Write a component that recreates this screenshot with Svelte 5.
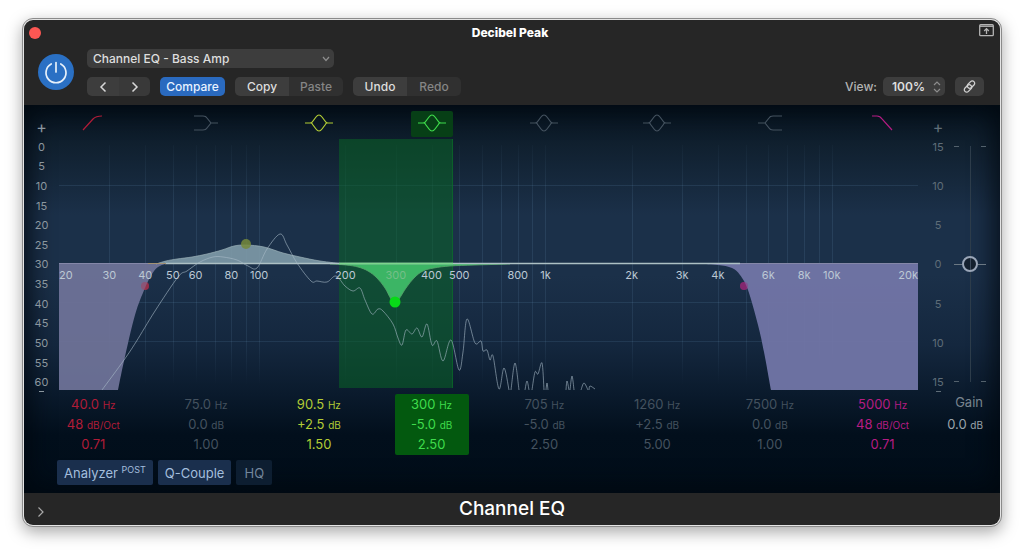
<script>
  const presets = ['Channel EQ - Bass Amp', 'Channel EQ - Kick Drum', 'Channel EQ - Vocal'];
  const zooms = ['75%', '100%', '150%'];

  let bands = [
    { shape: 'lowcut', color: '#b01c38', freq: '40.0', gain: '48', unit: 'dB/Oct', q: '0.71' },
    { shape: 'lowshelf', color: '#44525f', freq: '75.0', gain: '0.0', unit: 'dB', q: '1.00' },
    { shape: 'bell', color: '#b2cc35', freq: '90.5', gain: '+2.5', unit: 'dB', q: '1.50' },
    { shape: 'bell', color: '#3fdc4c', freq: '300', gain: '-5.0', unit: 'dB', q: '2.50' },
    { shape: 'bell', color: '#44525f', freq: '705', gain: '-5.0', unit: 'dB', q: '2.50' },
    { shape: 'bell', color: '#44525f', freq: '1260', gain: '+2.5', unit: 'dB', q: '5.00' },
    { shape: 'highshelf', color: '#44525f', freq: '7500', gain: '0.0', unit: 'dB', q: '1.00' },
    { shape: 'highcut', color: '#b51c83', freq: '5000', gain: '48', unit: 'dB/Oct', q: '0.71' },
  ];

  const shapes = {
    lowcut: 'M5 17 L15 6 Q18 3 24 3',
    lowshelf: 'M3 3 H12 Q15 3 16 5 L20 10 H27 M20 10 L16 15 Q15 17 12 17 H3',
    bell: 'M1 10 H6 Q8 10 9 8 L12 4 Q15 0 18 4 L21 8 Q22 10 24 10 H29 M7 10 Q8 10 9 12 L12 16 Q15 20 18 16 L21 12 Q22 10 23 10',
    highshelf: 'M27 3 H18 Q15 3 14 5 L10 10 H3 M10 10 L14 15 Q15 17 18 17 H27',
    highcut: 'M4 3 H9 Q12 3 14 6 L24 17',
  };

  const analyzerScale = ['+', 0, 5, 10, 15, 20, 25, 30, 35, 40, 45, 50, 55, 60];
  const gainScale = ['+', 15, '', 10, '', 5, '', 0, '', 5, '', 10, '', 15];

  const freqLabels = [
    [20, '20'], [30, '30'], [40, '40'], [50, '50'], [60, '60'], [80, '80'], [100, '100'],
    [200, '200'], [300, '300'], [400, '400'], [500, '500'], [800, '800'], [1000, '1k'],
    [2000, '2k'], [3000, '3k'], [4000, '4k'], [6000, '6k'], [8000, '8k'], [10000, '10k'],
    [20000, '20k'],
  ];

  const gridFreqs = [
    30, 40, 50, 60, 70, 80, 90, 100, 200, 300, 400, 500, 600, 700, 800, 900,
    1000, 2000, 3000, 4000, 5000, 6000, 7000, 8000, 9000, 10000,
  ];

  // position on the log axis, 0..1 for 20 Hz..20 kHz
  const pos = (f) => Math.log10(f / 20) / 3;
  const gridX = (f) => 59 + pos(f) * 859;

  // smooth line through the points (Catmull-Rom as beziers)
  function smooth(pts) {
    let d = `${pts[0][0]} ${pts[0][1]}`;
    for (let i = 0; i < pts.length - 1; i++) {
      const p0 = pts[i - 1] || pts[i];
      const p1 = pts[i];
      const p2 = pts[i + 1];
      const p3 = pts[i + 2] || p2;
      const c1 = [p1[0] + (p2[0] - p0[0]) / 6, p1[1] + (p2[1] - p0[1]) / 6];
      const c2 = [p2[0] - (p3[0] - p1[0]) / 6, p2[1] - (p3[1] - p1[1]) / 6];
      d += ` C${c1} ${c2} ${p2}`;
    }
    return d;
  }

  const lowCut = smooth([[165, 264], [158, 267], [152, 274], [145, 288], [135, 315], [124, 361], [118, 390]]);
  const boost = smooth([[156, 264], [166, 261], [177, 259], [192, 257], [207, 254], [222, 250], [234, 246], [246, 245], [264, 247], [283, 253], [300, 257], [320, 261], [345, 264]]);
  const dip = smooth([[330, 264], [346, 265], [358, 267], [368, 271], [377, 278], [385, 288], [391, 299], [395, 302], [399, 299], [406, 288], [414, 278], [423, 271], [434, 268], [450, 266], [475, 265], [510, 264]]);
  const highCut = smooth([[700, 264], [718, 265], [732, 268], [740, 275], [748, 290], [758, 325], [764, 352], [771, 390]]);

  const spectrum = [
    [[102, 390], [124, 360], [136, 342], [155, 311], [178, 277], [187, 271], [200, 262], [213, 257], [223, 257], [237, 260], [248, 266], [257, 268], [267, 249], [280, 234], [287, 245], [297, 263], [311, 281], [317, 281], [327, 282], [336, 276], [345, 286], [353, 291], [360, 288], [365, 300], [372, 314], [378, 309], [383, 311], [393, 324], [398, 338], [402, 345], [406, 330], [412, 334], [417, 328], [422, 337], [427, 324], [432, 345], [437, 341], [443, 361], [451, 340], [459, 370], [463, 352], [467, 319], [475, 343], [481, 341], [483, 351], [487, 350], [490, 360], [493, 356], [499, 389], [504, 368], [509, 390]],
    [[511, 390], [515, 363], [519, 390]],
    [[525, 390], [527, 381], [529, 390]],
    [[532, 390], [535, 372], [538, 374], [542, 363], [544, 390]],
    [[546, 390], [547, 383], [548, 390]],
    [[566, 390], [567, 381], [569, 390]],
    [[570, 390], [572, 376], [574, 390]],
    [[581, 390], [584, 383], [588, 390]],
    [[589, 390], [590, 386], [595, 389]],
  ];

  let preset = presets[0];
  let zoom = '100%';
  let selected = 3;
  let gain = 0;
</script>

<div class="desktop">
  <main class="window">
    <header>
      <div class="titlebar">
        <button class="close" aria-label="Close"></button>
        <h1>Decibel Peak</h1>
        <button class="popout" aria-label="Detach window">
          <svg width="15" height="13" viewBox="0 0 15 13" fill="none" stroke="#b4b4b4">
            <rect x="0.7" y="0.7" width="13.6" height="11" rx="1" stroke-width="1.3" />
            <path d="M1 2.2 H14" stroke-width="1.4" />
            <path d="M7.5 10 V5 M5.2 7 L7.5 4.6 L9.8 7" stroke-width="1.3" />
          </svg>
        </button>
      </div>

      <div class="toolbar">
        <button class="power" aria-label="Power">
          <svg width="24" height="24" viewBox="0 0 24 24" fill="none" stroke="#e6f0fa" stroke-width="1.7" stroke-linecap="round">
            <path d="M12 2.5 V12" />
            <path d="M7.2 4 A10 10 0 1 0 16.8 4" />
          </svg>
        </button>

        <div class="controls">
          <div class="select preset">
            <select bind:value={preset} aria-label="Preset">
              {#each presets as name}
                <option>{name}</option>
              {/each}
            </select>
            <svg width="8" height="6" viewBox="0 0 8 6" fill="none" stroke="#8d8d8d" stroke-width="1.2">
              <path d="M1 1 L4 4.5 L7 1" />
            </svg>
          </div>
          <div class="row">
            <div class="group arrows">
              <button aria-label="Previous preset">
                <svg width="8" height="12" viewBox="0 0 8 12" fill="none" stroke="#d8d8d8" stroke-width="1.5">
                  <path d="M6.5 1.5 L2 6 L6.5 10.5" />
                </svg>
              </button>
              <button aria-label="Next preset">
                <svg width="8" height="12" viewBox="0 0 8 12" fill="none" stroke="#d8d8d8" stroke-width="1.5">
                  <path d="M1.5 1.5 L6 6 L1.5 10.5" />
                </svg>
              </button>
            </div>
            <button class="compare">Compare</button>
            <div class="group pair">
              <button>Copy</button>
              <button disabled>Paste</button>
            </div>
            <div class="group pair">
              <button>Undo</button>
              <button disabled>Redo</button>
            </div>
          </div>
        </div>

        <div class="view">
          <label for="zoom">View:</label>
          <div class="select zoom">
            <select id="zoom" bind:value={zoom}>
              {#each zooms as z}
                <option>{z}</option>
              {/each}
            </select>
            <svg width="8" height="12" viewBox="0 0 8 12" fill="none" stroke="#8d8d8d" stroke-width="1.2">
              <path d="M1 4 L4 1 L7 4 M1 8 L4 11 L7 8" />
            </svg>
          </div>
          <button class="link" aria-label="Link">
            <svg width="15" height="15" viewBox="0 0 15 15" fill="none" stroke="#d0d0d0" stroke-width="1.3">
              <rect x="-4.200" y="-2.400" width="8.400" height="4.800" rx="2.400" transform="translate(9 5.600) rotate(-45)" />
              <rect x="-4.200" y="-2.400" width="8.400" height="4.800" rx="2.400" transform="translate(6 9.400) rotate(-45)" />
            </svg>
          </button>
        </div>
      </div>
    </header>

    <section class="eq">
      <div class="bands shapes">
        {#each bands as band, i}
          <button
            class:active={selected === i}
            style="color: {band.color}"
            aria-label="Band {i + 1}"
            on:click={() => (selected = i)}>
            <svg width="30" height="20" viewBox="0 0 30 20" fill="none" stroke="currentColor" stroke-width="1.2">
              <path d={shapes[band.shape]} />
            </svg>
          </button>
        {/each}
      </div>

      <div class="scale left">
        {#each analyzerScale as label}
          <span class:plus={label === '+'}>{label}</span>
        {/each}
      </div>

      <div class="plot">
        <svg class="graph" viewBox="59 139 859 251" preserveAspectRatio="none" fill="none">
          <defs>
            <linearGradient id="fade" x1="0" y1="0" x2="0" y2="1">
              <stop offset="0" stop-color="#7fb0d8" stop-opacity="0.03" />
              <stop offset="0.25" stop-color="#7fb0d8" stop-opacity="0.13" />
              <stop offset="0.8" stop-color="#7fb0d8" stop-opacity="0.11" />
              <stop offset="1" stop-color="#7fb0d8" stop-opacity="0" />
            </linearGradient>
          </defs>

          {#each gridFreqs as f}
            <rect x={Math.round(gridX(f))} y="145" width="1" height="240" fill="url(#fade)" />
          {/each}
          <path d="M59 185.5 H918 M59 302.5 H918 M59 341.5 H918" stroke="#7fb0d8" stroke-opacity="0.13" />

          <rect x="339" y="139" width="114" height="249" fill="#0a6527" fill-opacity="0.55" />
          <path d="M452.5 139 V388" stroke="#0a7a28" stroke-opacity="0.5" />

          <circle cx="145" cy="286" r="4" fill="#b5304a" fill-opacity="0.65" />
          <circle cx="744" cy="286" r="4" fill="#a0257a" fill-opacity="0.65" />

          <path d="M59 263 H165 L{lowCut} L59 390 Z" fill="#6f7398" fill-opacity="0.94" />
          <path d="M{boost} Z" fill="#7f9ba9" fill-opacity="0.9" />
          <path d="M{dip} Z" fill="#3cb565" />
          <path d="M{highCut} H918 V263 H700 Z" fill="#7075a6" fill-opacity="0.96" />

          <path d="M{boost}" stroke="#9bb0b8" stroke-opacity="0.7" />
          <path d="M{dip}" stroke="#58a66c" stroke-opacity="0.8" />
          <path d="M59 263.5 H150 M740 263.5 H918" stroke="#8487a8" />
          <path d="M165 263.5 H740" stroke="#adc0c4" stroke-width="1.5" />
          <path d="M148 263.5 H166" stroke="#a39274" />
          <path d="M339 263.5 H453" stroke="#7cd58c" stroke-width="1.5" />

          <path d={spectrum.map((s) => 'M' + smooth(s)).join(' ')} stroke="#a9bac8" stroke-opacity="0.6" />

          <circle cx="145" cy="286" r="4" fill="#b5304a" fill-opacity="0.4" />
          <circle cx="744" cy="286" r="4" fill="#a0257a" fill-opacity="0.4" />
          <circle cx="246" cy="244" r="5" fill="#76893c" fill-opacity="0.85" />
          <circle cx="395" cy="302" r="5.5" fill="#08da18" />
        </svg>
        {#each freqLabels as [f, text]}
          <span
            class="freq"
            class:first={f === 20}
            class:last={f === 20000}
            class:dim={f === 300}
            style="left: {pos(f) * 100}%">{text}</span>
        {/each}
      </div>

      <div class="scale right">
        {#each gainScale as label}
          <span class:plus={label === '+'}>{label}</span>
        {/each}
      </div>

      <div class="fader">
        <input id="gain" type="range" min="-15" max="15" step="0.1" bind:value={gain} />
      </div>

      <div class="bands values">
        {#each bands as band, i}
          <div class="band" class:active={selected === i} style="color: {band.color}">
            <span>{band.freq} <small>Hz</small></span>
            <span>{band.gain} <small>{band.unit}</small></span>
            <span>{band.q}</span>
          </div>
        {/each}
      </div>

      <div class="gain">
        <label for="gain">Gain</label>
        <output for="gain">{gain.toFixed(1)} <small>dB</small></output>
      </div>

      <div class="options">
        <button class="on">Analyzer <sup>POST</sup></button>
        <button class="on">Q-Couple</button>
        <button>HQ</button>
      </div>
    </section>

    <footer>
      <button aria-label="Show details">
        <svg width="8" height="12" viewBox="0 0 8 12" fill="none" stroke="#a8a8a8" stroke-width="1.2">
          <path d="M1.5 1.5 L6 6 L1.5 10.5" />
        </svg>
      </button>
      <h2>Channel EQ</h2>
    </footer>
  </main>
</div>

<style>
  :global(body) {
    margin: 0;
    background: #fff;
  }

  .desktop {
    padding: 18px 22px 27px;
    font-family: Inter, 'Liberation Sans', sans-serif;
    font-size: 13px;
  }

  .window {
    border: 1px solid #8b8b8b;
    border-radius: 11px;
    padding: 1px;
    background: #e4e4e4;
    box-shadow: 0 5px 16px rgba(0, 0, 0, 0.35);
  }

  button,
  select {
    font: inherit;
    color: inherit;
    border: none;
    margin: 0;
    padding: 0;
    background: none;
  }

  svg {
    display: block;
  }

  header {
    height: 85px;
    background: #262626;
    border-radius: 9px 9px 0 0;
    color: #dedede;
    font-size: 12px;
    font-weight: 500;
  }

  .titlebar {
    display: flex;
    justify-content: space-between;
    align-items: center;
    height: 25px;
    padding: 0 6px 1px 5px;
  }

  h1 {
    margin: 0;
    font-size: 12px;
    font-weight: 800;
    color: #fff;
  }

  .close {
    width: 12px;
    height: 12px;
    border-radius: 50%;
    background: #fc5753;
  }

  .popout {
    padding-bottom: 4px;
  }

  .toolbar {
    display: flex;
    align-items: flex-start;
    padding: 3px 16px 0 14px;
  }

  .power {
    display: grid;
    place-items: center;
    width: 36px;
    height: 36px;
    margin: 5px 13px 0 0;
    border-radius: 50%;
    background: #2a70c4;
  }

  .controls {
    display: flex;
    flex-direction: column;
    gap: 9px;
  }

  .row,
  .group {
    display: flex;
  }

  .row {
    gap: 10px;
  }

  .select {
    display: flex;
    align-items: center;
    height: 19px;
    border-radius: 5px;
    background: #3d3d3d;
  }

  .select select {
    appearance: none;
    flex: 1;
    height: 19px;
    padding-left: 6px;
    outline: none;
  }

  .select svg {
    margin-right: 4px;
    pointer-events: none;
  }

  .preset {
    width: 247px;
  }

  .group,
  .compare,
  .link {
    height: 19px;
    border-radius: 5px;
    overflow: hidden;
  }

  .group button {
    display: grid;
    place-items: center;
    background: #3d3d3d;
  }

  .group button:disabled {
    background: #303030;
    color: #858585;
  }

  .arrows button {
    width: 32px;
  }

  .arrows button + button {
    width: 31px;
    background: #393939;
  }

  .pair button {
    width: 54px;
  }

  .compare {
    width: 65px;
    background: #2a6abf;
    color: #e8f2ff;
  }

  .view {
    display: flex;
    align-items: center;
    gap: 10px;
    margin: 28px 0 0 auto;
  }

  .view label {
    margin-right: -4px;
    color: #b4b4b4;
  }

  .zoom {
    width: 62px;
    font-weight: 600;
  }

  .zoom select {
    width: 50px;
    padding-left: 9px;
  }

  .link {
    display: grid;
    place-items: center;
    width: 29px;
    background: #3d3d3d;
  }

  .eq {
    display: grid;
    grid-template-columns: 35px 1fr 40px 24px 18px;
    grid-template-rows: 34px 251px 65px 38px;
    background: linear-gradient(#06131f 0, #10202f 40px, #1b3049 110px, #1b3049 170px, #14273e 240px, #0a1a2c 290px, #020f1c 330px, #010d19 100%);
    box-shadow: inset 0 0 24px 6px rgba(0, 8, 14, 0.8);
    color: #78848e;
  }

  .bands {
    display: grid;
    grid-template-columns: repeat(8, 1fr);
    grid-column: 1 / -1;
    margin: 0 61px 0 13px;
    justify-items: center;
  }

  .shapes {
    grid-row: 1;
    align-items: center;
    padding-top: 4px;
  }

  .shapes button {
    display: grid;
    place-items: center;
    width: 42px;
    height: 26px;
    padding-bottom: 2px;
    border-radius: 2px;
  }

  .shapes button.active {
    background: #073f16;
  }

  .scale {
    display: flex;
    flex-direction: column;
    grid-row: 1 / 3;
    margin-top: 12px;
    margin-bottom: -2px;
    font-size: 11px;
    text-align: center;
  }

  .scale span {
    display: grid;
    place-items: center;
    flex: 1;
  }

  .scale .plus {
    font-size: 16px;
  }

  .scale::after {
    content: '';
    align-self: center;
    width: 5px;
    height: 1px;
    margin-top: -1px;
    background: currentColor;
  }

  .left {
    grid-column: 1;
    color: #8c979f;
  }

  .right {
    grid-column: 3;
    color: #5f6d78;
  }

  .plot {
    position: relative;
    grid-column: 2;
    grid-row: 2;
  }

  .graph {
    width: 100%;
    height: 100%;
  }

  .freq {
    position: absolute;
    top: 129px;
    transform: translateX(-50%);
    font-size: 11px;
    line-height: 14px;
    color: #bcc8d4;
  }

  .freq.first {
    transform: none;
  }

  .freq.last {
    transform: translateX(-100%);
  }

  .freq.dim {
    color: #74bf88;
  }

  .fader {
    grid-column: 4;
    grid-row: 2;
    margin: 7px -4px 8px;
    background:
      linear-gradient(#53616c, #53616c) 0 0 / 5px 1px no-repeat,
      linear-gradient(#53616c, #53616c) 100% 0 / 5px 1px no-repeat,
      linear-gradient(#6b7883, #6b7883) 0 50% / 8px 1px no-repeat,
      linear-gradient(#6b7883, #6b7883) 100% 50% / 8px 1px no-repeat,
      linear-gradient(#53616c, #53616c) 0 100% / 5px 1px no-repeat,
      linear-gradient(#53616c, #53616c) 100% 100% / 5px 1px no-repeat,
      linear-gradient(#2d3c4a, #2d3c4a) 50% 0 / 1px 100% no-repeat;
  }

  .fader input {
    appearance: none;
    writing-mode: vertical-lr;
    direction: rtl;
    display: block;
    width: 100%;
    height: 100%;
    margin: 0;
    background: none;
  }

  .fader input::-webkit-slider-thumb {
    appearance: none;
    box-sizing: border-box;
    width: 16px;
    height: 16px;
    border: 2px solid #9aa6b8;
    border-radius: 50%;
    background: linear-gradient(#3c4a5c, #3c4a5c) 50% 50% / 1px 100% no-repeat #14202e;
  }

  small {
    font-size: 10px;
    line-height: 1;
  }

  .values {
    grid-row: 3;
    align-items: start;
    padding-top: 4px;
  }

  .band {
    display: flex;
    flex-direction: column;
    align-items: center;
    width: 74px;
    height: 61px;
    border-radius: 2px;
    line-height: 20px;
  }

  .band span {
    height: 20px;
    white-space: nowrap;
  }

  .band.active {
    background: #03590f;
  }

  .gain {
    display: flex;
    flex-direction: column;
    align-items: flex-end;
    grid-column: 3 / -1;
    grid-row: 3;
    padding: 2px 17px 0 0;
    line-height: 20px;
  }

  .gain output {
    padding-top: 2px;
    color: #9aa4ac;
    white-space: nowrap;
  }

  .options {
    display: flex;
    gap: 5px;
    grid-column: 1 / -1;
    grid-row: 4;
    padding: 5px 0 0 33px;
  }

  .options button {
    min-width: 36px;
    height: 25px;
    padding: 0 7px;
    border-radius: 2px;
    background: #0d1e31;
    color: #73869c;
    font-size: 13px;
  }

  .options .on {
    background: #1a2f4d;
    color: #a3bedd;
  }

  sup {
    font-size: 9px;
    line-height: 0;
  }

  footer {
    display: grid;
    grid-template-columns: 1fr auto 1fr;
    align-items: center;
    height: 32px;
    background: #262626;
    border-radius: 0 0 9px 9px;
  }

  footer button {
    justify-self: start;
    padding: 6px 0 0 13px;
  }

  h2 {
    margin: 0;
    font-size: 19px;
    font-weight: 500;
    line-height: 28px;
    color: #fff;
  }
</style>
